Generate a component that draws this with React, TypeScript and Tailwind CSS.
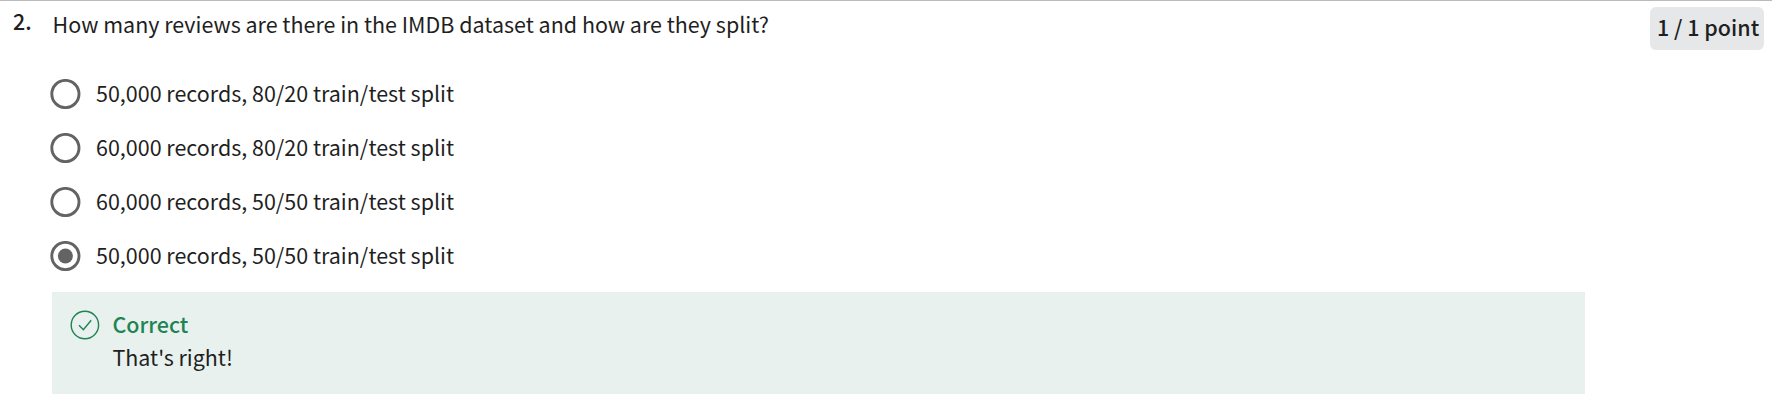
const options = [
  { label: "50,000 records, 80/20 train/test split", selected: false },
  { label: "60,000 records, 80/20 train/test split", selected: false },
  { label: "60,000 records, 50/50 train/test split", selected: false },
  { label: "50,000 records, 50/50 train/test split", selected: true },
];

function Radio({ selected }: { selected: boolean }) {
  return (
    <svg width="31" height="30" viewBox="0 0 31 30" className="shrink-0">
      <circle cx="15.4" cy="15" r="13.6" fill="none" stroke="#636363" strokeWidth="2.9" />
      {selected && <circle cx="15.4" cy="15" r="7.5" fill="#636363" />}
    </svg>
  );
}

export default function App() {
  return (
    <main className="h-[401px] w-full border-t border-[#bbbbbb] bg-white font-['Noto_Sans_CJK_SC',sans-serif] text-[21.47px] leading-[30px] text-[#1f1f1f]">
      <header className="flex h-[78px] items-start">
        <div className="w-[52.6px] shrink-0 pt-[5px] pl-[13px] font-medium">2.</div>
        <h1 className="grow pt-[8px] whitespace-nowrap">
          How many reviews are there in the IMDB dataset and how are they split?
        </h1>
        <div className="mt-[6px] mr-2 h-[43px] w-[114px] shrink-0 rounded-md bg-[#e5e7e8] pt-[5px] pl-[7px] font-medium whitespace-nowrap">
          1 / 1 point
        </div>
      </header>
      <ul className="flex h-[213px] flex-col gap-6 pl-[50px]">
        {options.map((option) => (
          <li key={option.label} className="flex h-[30px] items-center gap-[15px] whitespace-nowrap">
            <Radio selected={option.selected} />
            <span className="pb-[2px]">{option.label}</span>
          </li>
        ))}
      </ul>
      <section className="ml-[52px] flex h-[102px] w-[1533px] gap-[12.4px] bg-[#e8f1ee] pt-[17px] pl-[18px]">
        <svg width="30" height="32" viewBox="0 0 30 32" fill="none" stroke="#1f8354" className="shrink-0">
          <circle cx="14.9" cy="16" r="13.7" strokeWidth="1.4" />
          <path d="M9 16.2L13.4 20.8L21.2 11.3" strokeWidth="1.4" />
        </svg>
        <div>
          <h2 className="font-medium text-[#1f8354]">Correct</h2>
          <p className="pt-[3px]">That's right!</p>
        </div>
      </section>
    </main>
  );
}
